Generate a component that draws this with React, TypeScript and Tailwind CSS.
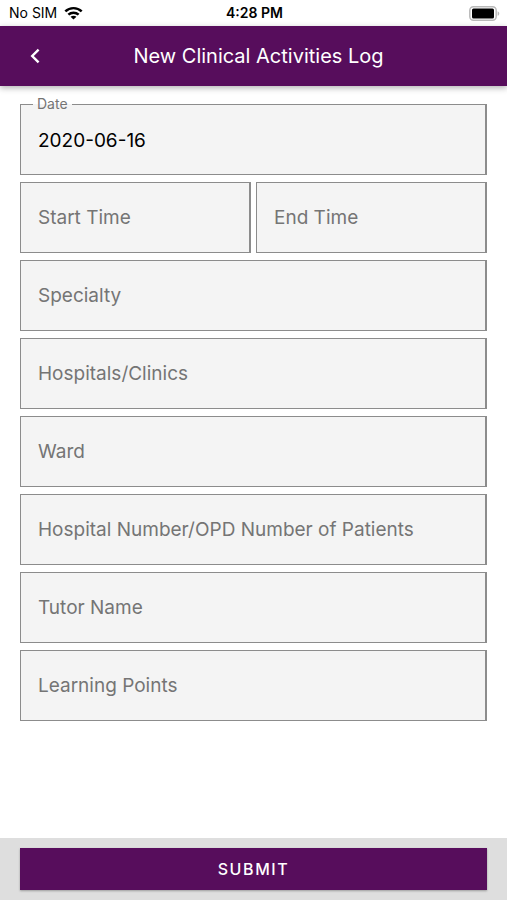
import { useState } from "react";

interface OutlinedFieldProps {
  id: string;
  label: string;
}

const fields: OutlinedFieldProps[] = [
  { id: "specialty", label: "Specialty" },
  { id: "hospital", label: "Hospitals/Clinics" },
  { id: "ward", label: "Ward" },
  { id: "patient-number", label: "Hospital Number/OPD Number of Patients" },
  { id: "tutor", label: "Tutor Name" },
  { id: "learning-points", label: "Learning Points" },
];

function OutlinedField({ id, label }: OutlinedFieldProps) {
  // Input and label share one grid cell, the label shows while the input is empty
  return (
    <div className="grid min-w-0 flex-1 text-[19px]">
      <input
        id={id}
        type="text"
        placeholder=" "
        className="peer col-start-1 row-start-1 h-[71px] w-full border border-r-2 border-[#8c8c8c] bg-[#f4f4f4] px-[17px] text-black outline-none"
      />
      <label
        htmlFor={id}
        className="invisible col-start-1 row-start-1 cursor-text self-center justify-self-start px-[18px] pt-0.5 text-[#757575] peer-placeholder-shown:visible"
      >
        {label}
      </label>
    </div>
  );
}

function StatusBar() {
  return (
    <div className="grid h-[26px] grid-cols-3 items-center pr-[7px] pl-[9px] text-sm text-black">
      <div className="flex items-center gap-[7px]">
        <span>No SIM</span>
        <svg className="h-[14px] w-[19px]" viewBox="0 0 20 14" fill="none" stroke="black" strokeWidth="2.6">
          <path d="M1.4 5.4C6.2 0.7 13.8 0.7 18.6 5.4" />
          <path d="M4.6 8.8C7.7 5.9 12.3 5.9 15.4 8.8" />
          <path d="M10 13.8L6.9 10.9C8.7 9.4 11.3 9.4 13.1 10.9Z" fill="black" stroke="none" />
        </svg>
      </div>
      <span className="text-center font-semibold">4:28 PM</span>
      <svg className="h-[15px] w-[31px] justify-self-end" viewBox="0 0 31 15">
        <rect x="0.8" y="0.8" width="26.4" height="13.4" rx="3.6" fill="white" stroke="#b9b9b9" strokeWidth="1.5" />
        <rect x="3" y="2.6" width="22" height="9.8" rx="1.5" fill="black" />
        <path d="M28.6 5.2C30.8 6 30.8 9 28.6 9.8Z" fill="#b9b9b9" />
      </svg>
    </div>
  );
}

export default function App() {
  const [date, setDate] = useState("2020-06-16");

  return (
    <div className="flex min-h-screen flex-col bg-white font-[Inter,'Liberation_Sans',sans-serif]">
      <StatusBar />

      <header className="grid h-[60px] grid-cols-[30px_1fr_20px] items-center bg-[#570d5c] px-5 text-white shadow-[0_2px_6px_rgba(0,0,0,0.3)]">
        <button type="button" aria-label="Back" className="flex h-10 items-center justify-center">
          <svg className="h-[16px] w-[10px]" viewBox="0 0 10 16" fill="none" stroke="white" strokeWidth="2.4">
            <path d="M8.6 1.6L2.2 8L8.6 14.4" />
          </svg>
        </button>
        <h1 className="text-center text-xl">New Clinical Activities Log</h1>
      </header>

      <form id="log-form" className="flex flex-1 flex-col gap-[7px] px-5 pt-[10px] pb-4">
        {/* The legend cuts the notch in the outline */}
        <fieldset className="h-[79px] border border-r-2 border-[#8c8c8c] bg-[#f4f4f4] px-3">
          <legend className="h-4 px-1 text-sm leading-4 text-[#757575]">
            <label htmlFor="date">Date</label>
          </legend>
          <input
            id="date"
            type="text"
            value={date}
            onChange={(e) => setDate(e.target.value)}
            className="block h-14 w-full bg-transparent px-[5px] text-[19px] text-black outline-none"
          />
        </fieldset>

        <div className="flex gap-[5px]">
          <OutlinedField id="start-time" label="Start Time" />
          <OutlinedField id="end-time" label="End Time" />
        </div>

        {fields.map((field) => (
          <div key={field.id} className="flex">
            <OutlinedField id={field.id} label={field.label} />
          </div>
        ))}
      </form>

      <footer className="bg-[#dedede] px-5 py-[10px]">
        <button
          type="submit"
          form="log-form"
          className="block h-[42px] w-full bg-[#570d5c] text-base font-medium tracking-widest text-white shadow-[0_1px_2px_rgba(0,0,0,0.3)]"
        >
          SUBMIT
        </button>
      </footer>
    </div>
  );
}
